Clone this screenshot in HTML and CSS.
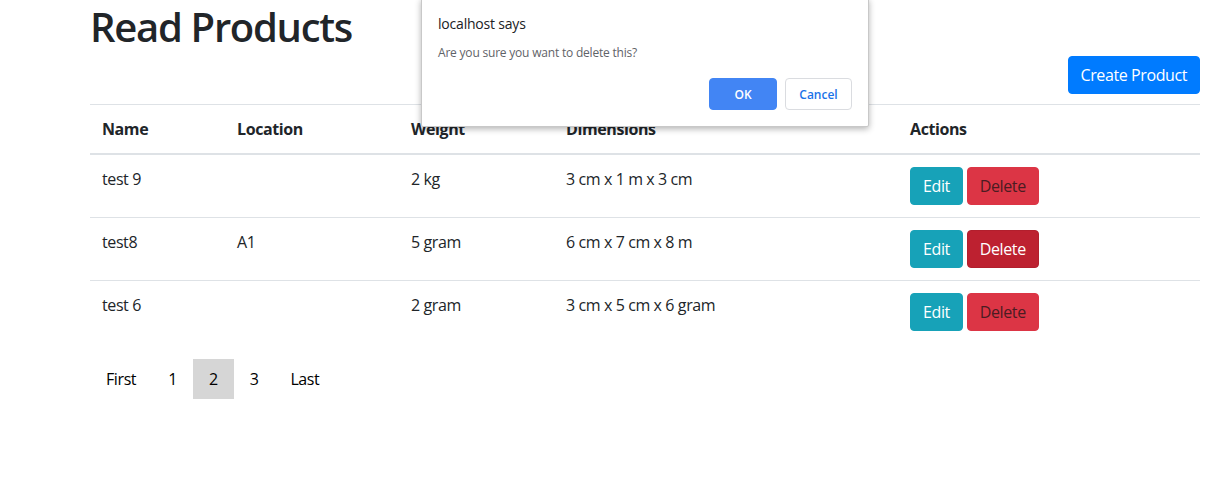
FILE: index.html
```html
<!DOCTYPE html>
<html>
<head>
<meta charset="utf-8">
<link rel="stylesheet" href="styles.css">
</head>
<body>
<div class="page">
  <h1 class="title">Read Products</h1>
  <div class="toolbar">
    <button class="btn btn-primary">Create Product</button>
  </div>
  <table class="table">
    <thead>
      <tr>
        <th class="c-name">Name</th>
        <th class="c-loc">Location</th>
        <th class="c-weight">Weight</th>
        <th class="c-dim">Dimensions</th>
        <th class="c-act">Actions</th>
      </tr>
    </thead>
    <tbody>
      <tr>
        <td>test 9</td>
        <td></td>
        <td>2 kg</td>
        <td>3 cm x 1 m x 3 cm</td>
        <td><div class="actions"><button class="btn btn-info">Edit</button><button class="btn btn-danger">Delete</button></div></td>
      </tr>
      <tr>
        <td>test8</td>
        <td>A1</td>
        <td>5 gram</td>
        <td>6 cm x 7 cm x 8 m</td>
        <td><div class="actions"><button class="btn btn-info">Edit</button><button class="btn btn-danger active">Delete</button></div></td>
      </tr>
      <tr>
        <td>test 6</td>
        <td></td>
        <td>2 gram</td>
        <td>3 cm x 5 cm x 6 gram</td>
        <td><div class="actions"><button class="btn btn-info">Edit</button><button class="btn btn-danger">Delete</button></div></td>
      </tr>
    </tbody>
  </table>
  <div class="pagination">
    <span class="page-item">First</span>
    <span class="page-item">1</span>
    <span class="page-item current">2</span>
    <span class="page-item">3</span>
    <span class="page-item">Last</span>
  </div>
</div>
<div class="dialog">
  <div class="dialog-title">localhost says</div>
  <div class="dialog-msg">Are you sure you want to delete this?</div>
  <div class="dialog-buttons">
    <button class="dbtn dbtn-ok">OK</button>
    <button class="dbtn dbtn-cancel">Cancel</button>
  </div>
</div>
</body>
</html>
```

FILE: styles.css
```css
* { box-sizing: border-box; }
html, body { margin: 0; padding: 0; background: #fff; }
body {
  font-family: "Open Sans", "Noto Sans", "Liberation Sans", sans-serif;
  font-size: 16px;
  line-height: 24px;
  letter-spacing: -0.4px;
  color: #212529;
}
.page {
  margin-left: 90px;
  width: 1110px;
}
.title {
  margin: 0;
  padding-top: 2px;
  font-size: 40px;
  line-height: 50px;
  font-weight: 600;
  letter-spacing: -1.3px;
  color: #212529;
}
.toolbar {
  display: flex;
  justify-content: flex-end;
  margin-top: 4px;
}
.btn {
  font-family: inherit;
  font-size: 16px;
  line-height: 24px;
  letter-spacing: -0.4px;
  padding: 6px 12px;
  border: 1px solid transparent;
  border-radius: 4px;
  cursor: pointer;
}
.btn-primary { background: #007bff; color: #fff; border-color: #007bff; }
.btn-info { background: #17a2b8; color: #fff; border-color: #17a2b8; }
.btn-danger { background: #dc3545; color: #4a1c22; border-color: #dc3545; }
.btn-danger.active { background: #bd2130; border-color: #b21f2d; color: #fff; }
.table {
  width: 100%;
  border-collapse: collapse;
  margin-top: 10px;
}
.table th, .table td {
  text-align: left;
  vertical-align: top;
  padding: 12px;
  border-top: 1px solid #dee2e6;
}
.table th { font-weight: 700; }
.table thead th { border-bottom: 2px solid #dee2e6; }
.c-name { width: 135px; }
.c-loc { width: 174px; }
.c-weight { width: 155px; }
.c-dim { width: 344px; }
.actions { display: flex; gap: 4px; }
.pagination {
  display: flex;
  margin-top: 16px;
}
.page-item {
  padding: 8px 16px;
  line-height: 24px;
  color: #000;
}
.page-item.current { background: #d6d6d6; }
.dialog {
  position: absolute;
  top: -2px;
  left: 421px;
  width: 448px;
  background: #fff;
  border: 1px solid #c8c8c8;
  border-radius: 2px;
  box-shadow: 0 2px 6px rgba(0,0,0,0.3);
  padding: 16px;
  font-family: "Open Sans", "Noto Sans", sans-serif;
  letter-spacing: -0.2px;
}
.dialog-title {
  font-size: 14px;
  line-height: 18px;
  color: #202124;
}
.dialog-msg {
  margin-top: 12px;
  font-size: 12px;
  line-height: 16px;
  color: #5f6368;
}
.dialog-buttons {
  display: flex;
  justify-content: flex-end;
  gap: 8px;
  margin-top: 17px;
}
.dbtn {
  font-family: inherit;
  font-size: 12px;
  font-weight: 600;
  height: 32px;
  border-radius: 4px;
  padding: 0;
}
.dbtn-ok { width: 68px; background: #4285f4; color: #fff; border: 1px solid #4285f4; }
.dbtn-cancel { width: 67px; background: #fff; color: #1a73e8; border: 1px solid #dadce0; }
```
